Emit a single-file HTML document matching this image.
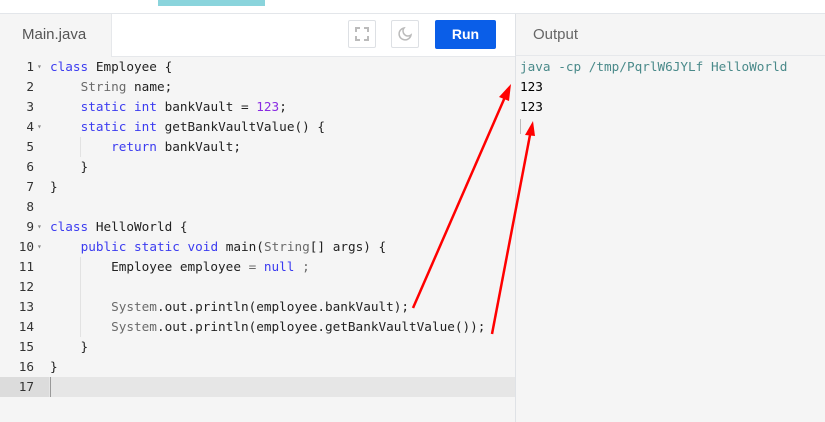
<!DOCTYPE html>
<html><head><style>
body{margin:0;width:825px;height:422px;overflow:hidden;background:#f5f5f5;font-family:"Liberation Sans",sans-serif;position:relative}
.top{position:absolute;left:0;top:0;width:825px;height:13px;background:#fff;border-bottom:1px solid #e3e6ea}
.teal{position:absolute;left:158px;top:0;width:107px;height:6px;background:#8ad4dc}
.hdr{position:absolute;top:14px;left:0;width:515px;height:42px;background:#fff;border-bottom:1px solid #e6e8eb}
.tab{position:absolute;left:0;top:0;width:112px;height:43px;background:#f5f5f5;border-right:1px solid #e6e8eb;color:#555;font-size:15px;line-height:42px;padding-left:22px;box-sizing:border-box}
.ib{position:absolute;top:6px;width:28px;height:28px;border:1px solid #dde0e4;border-radius:2px;box-sizing:border-box}
.run{position:absolute;left:435px;top:6px;width:61px;height:29px;background:#0a5ee8;color:#fff;font-weight:bold;font-size:14px;text-align:center;line-height:29px;border-radius:2px}
.ohdr{position:absolute;left:515px;top:14px;width:310px;height:42px;border-left:1px solid #dfe2e6;border-bottom:1px solid #e6e8eb;color:#666;font-size:15px;line-height:42px;padding-left:17px;box-sizing:border-box;background:#f5f5f5}
.div{position:absolute;left:515px;top:56px;width:1px;height:366px;background:#dfe2e6}
.code{position:absolute;top:57px;left:0;width:515px;font-family:"DejaVu Sans Mono",monospace;font-size:12.7px}
.l{height:20px;line-height:20px;position:relative;white-space:pre;color:#222}
.n{position:absolute;left:0;width:34px;text-align:right;color:#333}
.f{position:absolute;left:37px;color:#888;font-size:8px}
.t{position:absolute;left:50px}
.k{color:#3b3bf0}.g{color:#6a6a6a}.p{color:#8a2be2}
.hl{background:#e6e6e6}
.gd{position:absolute;width:1px;background:#e2e2e2}
.out{position:absolute;left:520px;top:57px;font-family:"DejaVu Sans Mono",monospace;font-size:12.7px}
.out div{height:20px;line-height:20px;white-space:pre}
</style></head><body>
<div class="top"><div class="teal"></div></div>
<div class="hdr">
<div class="tab">Main.java</div>
<div class="ib" style="left:348px"><svg width="26" height="26" viewBox="0 0 26 26" fill="none" stroke="#bbb" stroke-width="2"><path d="M7 11V7h4M15 7h4v4M19 15v4h-4M11 19H7v-4"/></svg></div>
<div class="ib" style="left:391px"><svg width="26" height="26" viewBox="0 0 26 26" fill="none" stroke="#bbb" stroke-width="1.5"><path d="M12 7a6 6 0 1 0 7 7a5 5 0 0 1-7-7z"/></svg></div>
<div class="run">Run</div>
</div>
<div class="ohdr">Output</div>
<div class="div"></div>
<div class="gd" style="left:80px;top:137px;height:20px"></div>
<div class="gd" style="left:80px;top:257px;height:80px"></div>
<div class="code">
<div class="l"><span class="n">1</span><span class="f">▾</span><span class="t"><span class="k">class</span> Employee {</span></div>
<div class="l"><span class="n">2</span><span class="t">    <span class="g">String</span> name;</span></div>
<div class="l"><span class="n">3</span><span class="t">    <span class="k">static</span> <span class="k">int</span> bankVault = <span class="p">123</span>;</span></div>
<div class="l"><span class="n">4</span><span class="f">▾</span><span class="t">    <span class="k">static</span> <span class="k">int</span> getBankVaultValue() {</span></div>
<div class="l"><span class="n">5</span><span class="t">        <span class="k">return</span> bankVault;</span></div>
<div class="l"><span class="n">6</span><span class="t">    }</span></div>
<div class="l"><span class="n">7</span><span class="t">}</span></div>
<div class="l"><span class="n">8</span></div>
<div class="l"><span class="n">9</span><span class="f">▾</span><span class="t"><span class="k">class</span> HelloWorld {</span></div>
<div class="l"><span class="n">10</span><span class="f">▾</span><span class="t">    <span class="k">public</span> <span class="k">static</span> <span class="k">void</span> main(<span class="g">String</span>[] args) {</span></div>
<div class="l"><span class="n">11</span><span class="t">        Employee employee <span class="g">=</span> <span class="k">null</span> <span class="g">;</span></span></div>
<div class="l"><span class="n">12</span></div>
<div class="l"><span class="n">13</span><span class="t">        <span class="g">System</span>.out.println(employee.bankVault);</span></div>
<div class="l"><span class="n">14</span><span class="t">        <span class="g">System</span>.out.println(employee.getBankVaultValue());</span></div>
<div class="l"><span class="n">15</span><span class="t">    }</span></div>
<div class="l"><span class="n">16</span><span class="t">}</span></div>
<div class="l hl"><span class="n" style="background:#dcdcdc;width:49px;padding-right:15px;box-sizing:border-box;left:0">17</span><span class="t" style="border-left:1px solid #999;height:20px"></span></div>
</div>
<div class="out">
<div style="color:#4a8a8a">java -cp /tmp/PqrlW6JYLf HelloWorld</div>
<div>123</div>
<div>123</div>
<div><span style="border-left:1px solid #bbb"> </span></div>
</div>
<svg style="position:absolute;left:0;top:0" width="825" height="422">
<g stroke="#f00" stroke-width="2.5" fill="#f00">
<line x1="413" y1="308" x2="505" y2="97"/>
<polygon points="511,84 499,97 509,101" stroke="none"/>
<line x1="492" y1="334" x2="530" y2="135"/>
<polygon points="533,121 525,135 535,136" stroke="none"/>
</g></svg>
</body></html>
